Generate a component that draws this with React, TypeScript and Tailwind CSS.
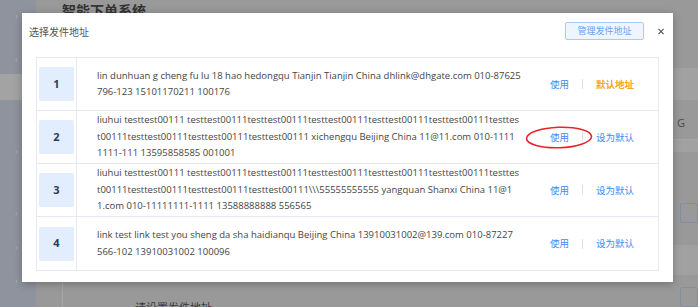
import React from "react";

const rows: { n: number; lines: string[]; isDefault: boolean }[] = [
  {
    n: 1,
    lines: [
      "lin dunhuan g cheng fu lu 18 hao hedongqu Tianjin Tianjin China dhlink@dhgate.com 010-87625",
      "796-123 15101170211 100176",
    ],
    isDefault: true,
  },
  {
    n: 2,
    lines: [
      "liuhui testtest00111 testtest00111testtest00111testtest00111testtest00111testtest00111testtes",
      "t00111testtest00111testtest00111testtest00111 xichengqu Beijing China 11@11.com 010-1111",
      "1111-111 13595858585 001001",
    ],
    isDefault: false,
  },
  {
    n: 3,
    lines: [
      "liuhui testtest00111 testtest00111testtest00111testtest00111testtest00111testtest00111testtes",
      "t00111testtest00111testtest00111testtest00111\\\\\\55555555555 yangquan Shanxi China 11@1",
      "1.com 010-11111111-1111 13588888888 556565",
    ],
    isDefault: false,
  },
  {
    n: 4,
    lines: [
      "link test link test you sheng da sha haidianqu Beijing China 13910031002@139.com 010-87227",
      "566-102 13910031002 100096",
    ],
    isDefault: false,
  },
];

const cjk = "font-['Noto_Sans_CJK_SC',sans-serif]";

export default function App() {
  return (
    <div className="relative w-[698px] h-[307px] overflow-hidden bg-[#999999] font-['Open_Sans','Noto_Sans_CJK_SC',sans-serif]">
      {/* background page */}
      <div className="flex h-full w-full">
        <div className="w-[36px] h-full bg-[#8f939d] flex flex-col text-[#aeb1b8] text-[9px] leading-none">
          <div className="h-[30px] flex items-center pl-[15px]">›</div>
          <div className="h-[14px]" />
          <div className="h-[28px] flex items-center pl-[15px]">‹</div>
          <div className="h-[2px]" />
          <div className="h-[26px] bg-[#a3a3a3]" />
          <div className="h-[36px]" />
          <div className="h-[28px] flex items-center pl-[15px]">›</div>
          <div className="h-[34px]" />
          <div className="h-[28px] flex items-center pl-[15px]">›</div>
          <div className="h-[6px]" />
          <div className="h-[28px] flex items-center pl-[15px]">›</div>
          <div className="h-[6px]" />
          <div className="h-[28px] flex items-center pl-[15px]">›</div>
        </div>
        <div className="flex-1 flex flex-col">
          <div className="h-[13px] pl-[26px] relative">
            <div className={`${cjk} text-[14px] font-bold text-[#333] leading-none pt-[3px]`}>智能下单系统</div>
          </div>
          <div className="flex-1 flex">
            <div className="w-[26px]" />
            <div className="flex-1 border-l border-[#a8a8a8] flex flex-col">
              <div className="flex-1" />
              <div className={`${cjk} h-[7px] pl-[72px] text-[11px] leading-[14px] text-[#3a3a3a]`}>请设置发件地址</div>
            </div>
            <div className="w-[25px] flex flex-col">
              <div className="h-[55px]" />
              <div className="h-[32px] bg-[#a1a1a1]" />
              <div className="h-[40px] flex items-center pl-[4px] pt-[8px] text-[11px] text-[#4a4a4a] border-b border-[#a6a6a6]">G</div>
              <div className="h-[12px] bg-[#a1a1a1]" />
              <div className="h-[51px]" />
              <div className="h-[20px] ml-[7px] border border-[#7f8fa8] rounded-[2px]" />
              <div className="h-[22px]" />
              <div className="h-[30px] bg-[#a1a1a1]" />
              <div className="h-[12px]" />
              <div className="h-[20px] ml-[7px] border border-[#7f8fa8] rounded-[2px]" />
            </div>
          </div>
        </div>
      </div>

      {/* modal */}
      <div className="absolute left-[22px] top-[13px] w-[651px] h-[269px] bg-white shadow-[0_2px_8px_rgba(0,0,0,0.25)] flex flex-col">
        <div className="h-[36px] flex items-center pl-[7px] pr-[9px]">
          <div className={`${cjk} text-[10px] text-[#555] flex-1`}>选择发件地址</div>
          <div className={`${cjk} h-[18px] w-[79px] flex items-center justify-center border border-[#a7cbf8] bg-[#eef5ff] rounded-[2px] text-[9px] text-[#6aa3f5]`}>
            管理发件地址
          </div>
          <div className="ml-[14px] w-[6px] flex items-center justify-center">
            <svg width="7" height="7" viewBox="0 0 7 7">
              <path d="M0.5 0.5 L6.5 6.5 M6.5 0.5 L0.5 6.5" stroke="#555" strokeWidth="1.3" />
            </svg>
          </div>
        </div>
        <div className="mt-[8px] mx-[14px] border border-[#e6eaf0] flex flex-col">
          {rows.map((r, i) => (
            <div
              key={r.n}
              className={`flex h-[53px] ${i < rows.length - 1 ? "border-b border-[#e6eaf0]" : "h-[52px]"}`}
            >
              <div className="w-[40px] border-r border-[#e6eaf0] flex items-center pl-[2px]">
                <div className="w-[35px] h-[34px] bg-[#e2edfd] rounded-[2px] flex items-center justify-center text-[11px] font-bold text-[#2d3a63]">
                  {r.n}
                </div>
              </div>
              <div className="w-[453px] pl-[20px] flex flex-col justify-center text-[9.5px] leading-[16.5px] text-[#444]">
                {r.lines.map((l, k) => (
                  <div key={k} className="whitespace-nowrap">{l}</div>
                ))}
              </div>
              <div className={`${cjk} flex-1 flex items-center pl-[20px] text-[9.5px]`}>
                <span className="text-[#3d8af7]">使用</span>
                <span className="mx-[13px] w-px h-[10px] bg-[#dde2ea]" />
                {r.isDefault ? (
                  <span className="text-[#f5a623] font-bold">默认地址</span>
                ) : (
                  <span className="text-[#3d8af7]">设为默认</span>
                )}
              </div>
            </div>
          ))}
        </div>
      </div>

      {/* red annotation ellipse */}
      <svg className="absolute left-[524px] top-[125px]" width="70" height="25" viewBox="0 0 70 25">
        <ellipse cx="35" cy="12.5" rx="32.5" ry="10.2" fill="none" stroke="#e3262b" strokeWidth="1.6" transform="rotate(-2 35 12.5)" />
      </svg>
    </div>
  );
}
